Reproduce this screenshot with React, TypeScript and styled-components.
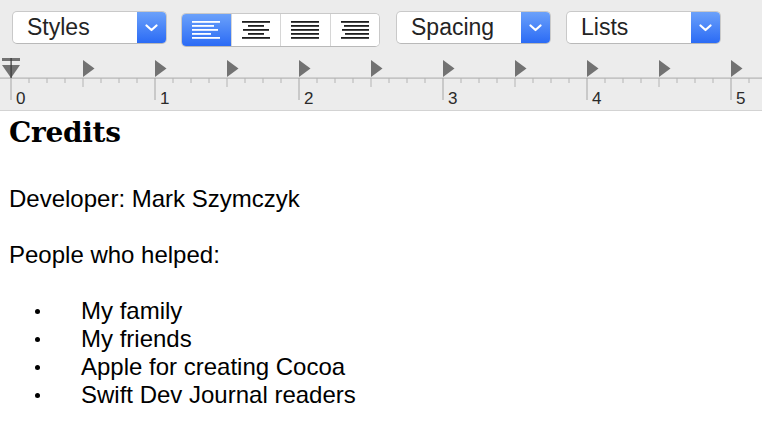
import * as React from 'react';
import styled, { createGlobalStyle } from 'styled-components';

const GlobalStyle = createGlobalStyle`
  html, body {
    margin: 0;
    padding: 0;
    background: #fff;
  }
`;

const Window = styled.div`
  width: 762px;
  height: 424px;
  overflow: hidden;
  background: #fff;
  font-family: "Liberation Sans", Arial, sans-serif;
`;

const Toolbar = styled.div`
  display: flex;
  align-items: flex-start;
  height: 55px;
  box-sizing: border-box;
  padding: 11px 0 0 12px;
  background: #ececec;
`;

const Popup = styled.div<{ $width: number; $gap: number }>`
  display: flex;
  width: ${(p) => p.$width}px;
  height: 33px;
  margin-right: ${(p) => p.$gap}px;
  box-sizing: border-box;
  border: 1px solid #c9c9c9;
  border-bottom-color: #b9b9b9;
  border-radius: 5px;
  background: #fff;
  overflow: hidden;
`;

const PopupLabel = styled.div`
  flex: 1;
  padding-left: 14px;
  font-size: 23px;
  line-height: 31px;
  color: #242424;
`;

const PopupArrow = styled.div`
  display: flex;
  align-items: center;
  justify-content: center;
  width: 29px;
  background: linear-gradient(#6ba1fa, #2b6bf5);
`;

const Segmented = styled.div`
  display: flex;
  margin: 2px 16px 0 0;
  width: 199px;
  height: 34px;
  box-sizing: border-box;
  border: 1px solid #c9c9c9;
  border-bottom-color: #b9b9b9;
  border-radius: 5px;
  background: #fff;
  overflow: hidden;
`;

const Segment = styled.div<{ $active?: boolean }>`
  display: flex;
  align-items: center;
  justify-content: center;
  flex: 1;
  box-sizing: border-box;
  border-left: 1px solid #d6d6d6;
  background: ${(p) => (p.$active ? 'linear-gradient(#6ba1fa, #2b6bf5)' : '#fff')};
  &:first-child {
    border-left: none;
  }
`;

const Ruler = styled.div`
  height: 55px;
  background: #ececec;
  border-bottom: 1px solid #d3d3d3;
`;

const Doc = styled.div`
  padding: 6px 0 0 9px;
  color: #000;
  font-size: 24px;
  line-height: 28px;
`;

const Title = styled.h1`
  margin: 0 0 36px;
  font-family: "DejaVu Serif", serif;
  font-weight: bold;
  font-size: 28px;
  line-height: 32px;
  letter-spacing: -0.3px;
`;

const Para = styled.p`
  margin: 0 0 28px;
`;

const List = styled.ul`
  list-style: none;
  margin: 0;
  padding: 0 0 0 24px;
`;

const Item = styled.li`
  display: grid;
  grid-template-columns: 48px auto;
`;

const Bullet = styled.span`
  align-self: start;
  width: 5px;
  height: 5px;
  margin: 12px 0 0 2px;
  border-radius: 50%;
  background: #000;
`;

const Chevron = () => (
  <svg width="13" height="8" viewBox="0 0 13 8">
    <polyline points="1.5,1.5 6.5,6 11.5,1.5" fill="none" stroke="#fff" strokeWidth="2.2" strokeLinecap="round" strokeLinejoin="round" />
  </svg>
);

const ALIGN_ROWS: Record<string, [number, number][]> = {
  left: [[0, 28], [0, 22], [0, 26], [0, 19], [0, 28]],
  center: [[0, 28], [6, 16], [1, 26], [6, 16], [0, 28]],
  justify: [[0, 28], [0, 28], [0, 28], [0, 28], [0, 28]],
  right: [[0, 28], [3, 25], [1, 27], [4, 24], [0, 28]],
};

const AlignIcon = ({ kind, color }: { kind: string; color: string }) => (
  <svg width="28" height="18" viewBox="0 0 28 18">
    {ALIGN_ROWS[kind].map(([x, w], i) => (
      <rect key={i} x={x} y={i * 4} width={w} height="1.8" fill={color} />
    ))}
  </svg>
);

const PopupButton = ({ label, width = 155, gap = 15 }: { label: string; width?: number; gap?: number }) => (
  <Popup $width={width} $gap={gap}>
    <PopupLabel>{label}</PopupLabel>
    <PopupArrow>
      <Chevron />
    </PopupArrow>
  </Popup>
);

const RulerMarks = () => {
  const ticks = [];
  for (let x = 11; x < 762; x += 18) {
    const step = Math.round((x - 11) / 18);
    const inch = step % 8 === 0;
    const half = step % 4 === 0;
    const h = inch ? 22 : half ? 9 : 5;
    ticks.push(<rect key={'t' + x} x={x - 0.5} y={23} width={1} height={h} fill={inch ? '#a6a6a6' : '#b3b3b3'} />);
  }
  const tabs = [];
  for (let x = 83; x < 762; x += 72) {
    tabs.push(<polygon key={'p' + x} points={`${x},5 ${x + 11.5},13.5 ${x},22`} fill="#727272" />);
  }
  const labels = [];
  for (let n = 0; n <= 5; n++) {
    labels.push(
      <text key={'n' + n} x={11 + n * 144 + 5} y={49} fontSize="17" fill="#2a2a2a" fontFamily="Liberation Sans, Arial, sans-serif">
        {n}
      </text>
    );
  }
  return (
    <svg width="762" height="55" viewBox="0 0 762 55" style={{ display: 'block' }}>
      <rect x={0} y={22.5} width={762} height={1.2} fill="#b4b4b4" />
      {ticks}
      {tabs}
      <rect x={2} y={3} width={18} height={3} fill="#727272" />
      <polygon points="2,10 20,10 11,23" fill="#727272" />
      <rect x={10.5} y={3} width={1.2} height={20} fill="#3a3a3a" />
      {labels}
    </svg>
  );
};

const App = () => {
  return (
    <Window>
      <GlobalStyle />
      <Toolbar>
        <PopupButton label="Styles" gap={14} />
        <Segmented>
          <Segment $active>
            <AlignIcon kind="left" color="#fff" />
          </Segment>
          <Segment>
            <AlignIcon kind="center" color="#1e1e1e" />
          </Segment>
          <Segment>
            <AlignIcon kind="justify" color="#1e1e1e" />
          </Segment>
          <Segment>
            <AlignIcon kind="right" color="#1e1e1e" />
          </Segment>
        </Segmented>
        <PopupButton label="Spacing" />
        <PopupButton label="Lists" />
      </Toolbar>
      <Ruler>
        <RulerMarks />
      </Ruler>
      <Doc>
        <Title>Credits</Title>
        <Para>Developer: Mark Szymczyk</Para>
        <Para>People who helped:</Para>
        <List>
          <Item><Bullet /><span>My family</span></Item>
          <Item><Bullet /><span>My friends</span></Item>
          <Item><Bullet /><span>Apple for creating Cocoa</span></Item>
          <Item><Bullet /><span>Swift Dev Journal readers</span></Item>
        </List>
      </Doc>
    </Window>
  );
};

export default App;
